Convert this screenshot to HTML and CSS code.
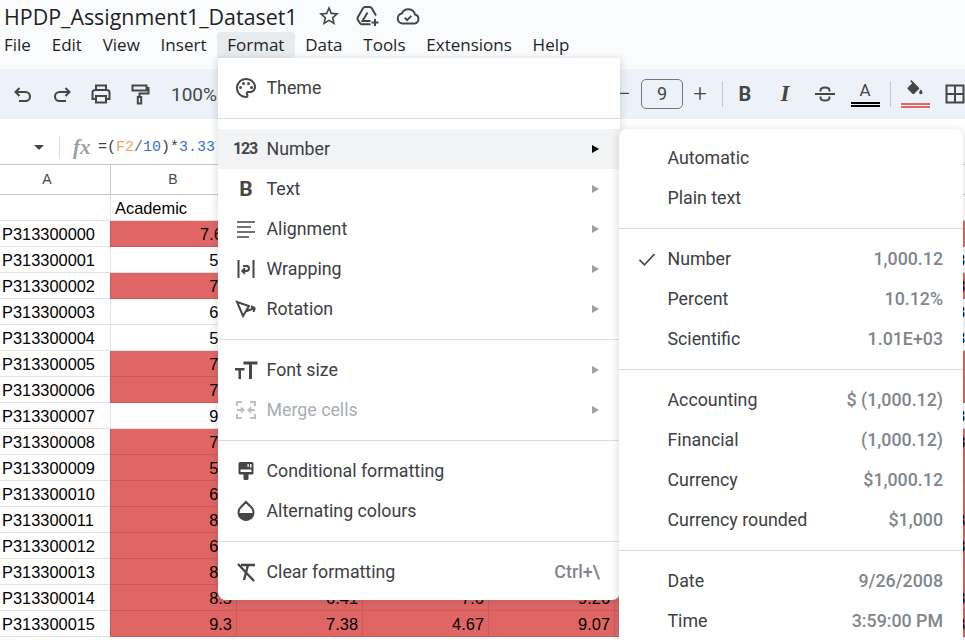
FILE: index.html
```html
<!DOCTYPE html>
<html lang="en">
<head>
<meta charset="utf-8">
<title>HPDP_Assignment1_Dataset1</title>
<link rel="stylesheet" href="styles.css">
</head>
<body>
<div class="app">
  <header class="head">
    <div class="title-row">
      <span class="doc-title">HPDP_Assignment1_Dataset1</span>
      <span class="title-icons">
        <svg class="t-icon" viewBox="0 0 24 24"><path class="fill" d="M22 9.24l-7.19-.62L12 2 9.19 8.63 2 9.24l5.46 4.73L5.82 21 12 17.27 18.18 21l-1.63-7.03L22 9.24zM12 15.4l-3.76 2.27 1-4.28-3.32-2.88 4.38-.38L12 6.1l1.71 4.04 4.38.38-3.32 2.88 1 4.28L12 15.4z"/></svg>
        <svg class="t-icon" viewBox="0 0 24 24"><path class="line" d="M9 3h4.500q1.500 0 2.300 1.300L20 11.500M9 3q-1.300 0-2 1.200L1.800 13.300q-.7 1.200 0 2.400l2 3.300q.8 1.300 2.200 1.300h8.500M11.500 8.500l-5 8.500h8M19 15v7M15.500 18.500h7"/></svg>
        <svg class="t-icon" viewBox="0 0 24 24"><path class="line" d="M6.500 19.500a5 5 0 0 1-.7-9.900A7 7 0 0 1 19 10.500a4.600 4.600 0 0 1-.5 9zM8.800 13.800l2.300 2.300 4.200-4.200"/></svg>
      </span>
    </div>
    <nav class="menu-bar">
      <span class="menu-item">File</span>
      <span class="menu-item">Edit</span>
      <span class="menu-item">View</span>
      <span class="menu-item">Insert</span>
      <span class="menu-item active">Format</span>
      <span class="menu-item">Data</span>
      <span class="menu-item">Tools</span>
      <span class="menu-item">Extensions</span>
      <span class="menu-item">Help</span>
    </nav>
  </header>

  <div class="toolbar">
    <svg class="tb-icon" viewBox="0 0 24 24"><path class="line" d="M8.500 6L4.500 10l4 4M4.500 10h10a4.500 4.500 0 0 1 0 9H8"/></svg>
    <svg class="tb-icon" viewBox="0 0 24 24"><path class="line" d="M15.500 6l4 4-4 4M19.500 10h-10a4.500 4.500 0 0 0 0 9H16"/></svg>
    <svg class="tb-icon" viewBox="0 0 24 24"><path class="line" d="M7 8V3.500h10V8M7 17H3.500v-6.500A2.500 2.500 0 0 1 6 8h12a2.500 2.500 0 0 1 2.500 2.500V17H17M7 14h10v6.500H7z"/></svg>
    <svg class="tb-icon" viewBox="0 0 24 24"><path class="line" d="M4.500 3.500h14v5h-14zM18.500 6h2v5.500h-9V15M9.800 15h3.400v6.500H9.800z"/></svg>
    <span class="zoom-level">100%</span>
    <div class="tb-right">
      <span class="tb-glyph">−</span>
      <span class="size-box">9</span>
      <span class="tb-glyph">+</span>
      <span class="tb-divider first"></span>
      <span class="tb-slot tb-bold">B</span>
      <span class="tb-slot tb-italic">I</span>
      <span class="tb-slot"><svg class="tb-icon" viewBox="0 0 24 24"><path class="line" d="M2 12h20M7.500 9.500V8.500C7.500 6.500 9.500 5.500 12 5.500s4.500 1 4.500 3v1M7.500 14.500v1c0 2 2 3 4.500 3s4.500-1 4.500-3v-1"/></svg></span>
      <span class="tb-slot swatch"><span class="swatch-a">A</span><span class="swatch-bar"></span></span>
      <span class="tb-divider"></span>
      <span class="tb-slot swatch">
        <svg class="fill-icon" viewBox="0 0 24 24"><path class="fill" d="M16.560 8.940L7.620 0 6.210 1.410l2.380 2.380-5.150 5.150c-.59.59-.59 1.540 0 2.120l5.500 5.500c.29.29.68.44 1.060.44s.77-.15 1.060-.44l5.500-5.500c.59-.58.59-1.530 0-2.120zM19 11.500s-2 2.170-2 3.500c0 1.100.9 2 2 2s2-.9 2-2c0-1.330-2-3.500-2-3.500z"/></svg>
        <span class="swatch-bar red"></span>
      </span>
      <span class="tb-slot"><svg class="tb-icon" viewBox="0 0 24 24"><path class="line" d="M3.500 3.500h17v17h-17zM12 3.500v17M3.500 12h17"/></svg></span>
    </div>
  </div>

  <div class="formula-bar">
    <span class="name-arrow"></span>
    <span class="fb-divider"></span>
    <span class="fx">fx</span>
    <code class="formula"><span>=(</span><span class="ref">F2</span><span class="op">/</span><span class="num">10</span><span>)*</span><span class="num">3.33</span></code>
  </div>

  <div class="sheet">
    <div class="cell first colhead col-a">A</div><div class="cell colhead">B</div><div class="cell colhead"></div><div class="cell colhead"></div><div class="cell colhead"></div><div class="cell colhead"></div><div class="cell colhead"></div>
    <div class="cell first"></div><div class="cell note">Academic</div><div class="cell"></div><div class="cell"></div><div class="cell"></div><div class="cell"></div><div class="cell"></div>

    <div class="cell first">P313300000</div><div class="cell hot">7.61</div><div class="cell hot"></div><div class="cell hot"></div><div class="cell hot"></div><div class="cell hot"></div><div class="cell hot"></div>
    <div class="cell first">P313300001</div><div class="cell">5.5</div><div class="cell"></div><div class="cell"></div><div class="cell"></div><div class="cell"></div><div class="cell">8</div>
    <div class="cell first">P313300002</div><div class="cell hot">7.5</div><div class="cell hot"></div><div class="cell hot"></div><div class="cell hot"></div><div class="cell hot"></div><div class="cell hot">8</div>
    <div class="cell first">P313300003</div><div class="cell">6.5</div><div class="cell"></div><div class="cell"></div><div class="cell"></div><div class="cell"></div><div class="cell">8</div>
    <div class="cell first">P313300004</div><div class="cell">5.5</div><div class="cell"></div><div class="cell"></div><div class="cell"></div><div class="cell"></div><div class="cell">8</div>
    <div class="cell first">P313300005</div><div class="cell hot">7.5</div><div class="cell hot"></div><div class="cell hot"></div><div class="cell hot"></div><div class="cell hot"></div><div class="cell hot"></div>
    <div class="cell first">P313300006</div><div class="cell hot">7.5</div><div class="cell hot"></div><div class="cell hot"></div><div class="cell hot"></div><div class="cell hot"></div><div class="cell hot"></div>
    <div class="cell first">P313300007</div><div class="cell">9.5</div><div class="cell"></div><div class="cell"></div><div class="cell"></div><div class="cell"></div><div class="cell">8</div>
    <div class="cell first">P313300008</div><div class="cell hot">7.5</div><div class="cell hot"></div><div class="cell hot"></div><div class="cell hot"></div><div class="cell hot"></div><div class="cell hot">8</div>
    <div class="cell first">P313300009</div><div class="cell hot">5.5</div><div class="cell hot"></div><div class="cell hot"></div><div class="cell hot"></div><div class="cell hot"></div><div class="cell hot"></div>
    <div class="cell first">P313300010</div><div class="cell hot">6.5</div><div class="cell hot"></div><div class="cell hot"></div><div class="cell hot"></div><div class="cell hot"></div><div class="cell hot"></div>
    <div class="cell first">P313300011</div><div class="cell hot">8.5</div><div class="cell hot"></div><div class="cell hot"></div><div class="cell hot"></div><div class="cell hot"></div><div class="cell hot">8</div>
    <div class="cell first">P313300012</div><div class="cell hot">6.5</div><div class="cell hot"></div><div class="cell hot"></div><div class="cell hot"></div><div class="cell hot"></div><div class="cell hot">8</div>
    <div class="cell first">P313300013</div><div class="cell hot">8.5</div><div class="cell hot"></div><div class="cell hot"></div><div class="cell hot"></div><div class="cell hot"></div><div class="cell hot"></div>
    <div class="cell first">P313300014</div><div class="cell hot">8.5</div><div class="cell hot">6.41</div><div class="cell hot">7.6</div><div class="cell hot">9.26</div><div class="cell hot"></div><div class="cell hot">8</div>
    <div class="cell first">P313300015</div><div class="cell hot">9.3</div><div class="cell hot">7.38</div><div class="cell hot">4.67</div><div class="cell hot">9.07</div><div class="cell hot"></div><div class="cell hot">8</div>
  </div>

  <div class="menu format-menu">
    <div class="row">
      <svg class="m-icon" viewBox="0 0 24 24"><path class="fill" d="M12 22C6.490 22 2 17.510 2 12S6.490 2 12 2s10 4.040 10 9c0 3.310-2.690 6-6 6h-1.770c-.28 0-.5.22-.5.5 0 .12.050.23.130.33.410.47.640 1.060.640 1.670A2.500 2.500 0 0 1 12 22zm0-18c-4.410 0-8 3.590-8 8s3.590 8 8 8c.28 0 .5-.22.5-.5a.54.54 0 0 0-.14-.35c-.41-.46-.63-1.050-.63-1.650a2.500 2.500 0 0 1 2.500-2.500H16c2.210 0 4-1.790 4-4 0-3.860-3.590-7-8-7z"/><circle class="fill" cx="6.500" cy="11.500" r="1.500"/><circle class="fill" cx="9.500" cy="7.500" r="1.500"/><circle class="fill" cx="14.500" cy="7.500" r="1.500"/><circle class="fill" cx="17.500" cy="11.500" r="1.500"/></svg>
      <span class="label">Theme</span>
    </div>
    <div class="sep"></div>
    <div class="row current">
      <span class="m-text digits">123</span>
      <span class="label">Number</span><span class="caret dark"></span>
    </div>
    <div class="row">
      <span class="m-text bold-b">B</span>
      <span class="label">Text</span><span class="caret"></span>
    </div>
    <div class="row">
      <svg class="m-icon" viewBox="0 0 24 24"><path class="line slim" d="M3 5h18M3 10h14M3 15h18M3 20h12"/></svg>
      <span class="label">Alignment</span><span class="caret"></span>
    </div>
    <div class="row">
      <svg class="m-icon" viewBox="0 0 24 24"><path class="line" d="M4.500 3v18M19.500 3v18M9 9h3.500a2.500 2.500 0 0 1 0 5H8.500M11 11.300L8.300 14l2.700 2.700"/></svg>
      <span class="label">Wrapping</span><span class="caret"></span>
    </div>
    <div class="row">
      <svg class="m-icon" viewBox="0 0 24 24"><path class="line" d="M3 5l12 4-6 10zM15 9l-6 10M11.500 14.500L21 11M21 11l-4-1.500M21 11l-1.500 4"/></svg>
      <span class="label">Rotation</span><span class="caret"></span>
    </div>
    <div class="sep"></div>
    <div class="row">
      <svg class="m-icon" viewBox="0 0 24 24"><path class="fill" d="M9.500 3.500h14v3h-5.500V21h-3V6.500H9.500zM1 10h9.500v2.500H7V21H4.500v-8.500H1z"/></svg>
      <span class="label">Font size</span><span class="caret"></span>
    </div>
    <div class="row disabled">
      <svg class="m-icon" viewBox="0 0 24 24"><path class="line faint" d="M3 8V4h5M16 4h5v4M3 16v4h5M16 20h5v-4M3 12h6.500M7 9.500L9.500 12 7 14.500M21 12h-6.500M17 9.500L14.500 12l2.500 2.500"/></svg>
      <span class="label">Merge cells</span><span class="caret"></span>
    </div>
    <div class="sep"></div>
    <div class="row">
      <svg class="m-icon" viewBox="0 0 24 24"><path class="fill" d="M6 3h12a1.500 1.500 0 0 1 1.500 1.500V14a1.500 1.500 0 0 1-1.500 1.500h-3.500v4a1.500 1.500 0 0 1-1.500 1.500h-2a1.500 1.500 0 0 1-1.500-1.500v-4H6A1.500 1.500 0 0 1 4.500 14V4.500A1.500 1.500 0 0 1 6 3zm.500 7.500v2.500h11v-2.500zm7-5.500v3h1.300V5zm2.500 0v3.500h1.500V5z"/></svg>
      <span class="label">Conditional formatting</span>
    </div>
    <div class="row">
      <svg class="m-icon" viewBox="0 0 24 24"><path class="line" d="M12 3l5.300 5.200a7.500 7.500 0 1 1-10.600 0z"/><path class="fill" d="M4.500 14h15a7.500 7.500 0 0 1-15 0z"/></svg>
      <span class="label">Alternating colours</span>
    </div>
    <div class="sep"></div>
    <div class="row">
      <svg class="m-icon" viewBox="0 0 24 24"><path class="line thick" d="M7 5h14M14 5l-4 15M4 4l16 17"/></svg>
      <span class="label">Clear formatting</span><span class="hint">Ctrl+\</span>
    </div>
  </div>

  <div class="menu number-menu">
    <div class="row sub"><span class="label">Automatic</span></div>
    <div class="row sub"><span class="label">Plain text</span></div>
    <div class="sep"></div>
    <div class="row sub"><svg class="check" viewBox="0 0 24 24"><path class="line" d="M3 13l6 6L21 6"/></svg><span class="label">Number</span><span class="hint">1,000.12</span></div>
    <div class="row sub"><span class="label">Percent</span><span class="hint">10.12%</span></div>
    <div class="row sub"><span class="label">Scientific</span><span class="hint">1.01E+03</span></div>
    <div class="sep"></div>
    <div class="row sub"><span class="label">Accounting</span><span class="hint">$ (1,000.12)</span></div>
    <div class="row sub"><span class="label">Financial</span><span class="hint">(1,000.12)</span></div>
    <div class="row sub"><span class="label">Currency</span><span class="hint">$1,000.12</span></div>
    <div class="row sub"><span class="label">Currency rounded</span><span class="hint">$1,000</span></div>
    <div class="sep"></div>
    <div class="row sub"><span class="label">Date</span><span class="hint">9/26/2008</span></div>
    <div class="row sub"><span class="label">Time</span><span class="hint">3:59:00 PM</span></div>
  </div>
</div>
</body>
</html>
```
FILE: styles.css
```css
* { box-sizing: border-box; }
html, body { margin: 0; height: 100%; overflow: hidden; background: #fff; }
.app { position: relative; width: 965px; height: 640px; overflow: hidden; font-family: Roboto, sans-serif; color: #3c4043; }
.line { fill: none; stroke: #444746; stroke-width: 2; }
.line.thick { stroke-width: 2.4; }
.line.slim { stroke-width: 1.6; }
.line.faint { stroke: #bdc1c6; }
.fill { fill: #444746; }

.head { height: 69px; background: #f9fbfd; }
.title-row { height: 32px; display: flex; align-items: center; padding-left: 4px; }
.doc-title { font-family: "Open Sans", sans-serif; font-size: 21.4px; color: #1f1f1f; }
.title-icons { display: flex; align-items: center; gap: 15.5px; margin-left: 19px; }
.t-icon { width: 24px; height: 24px; }
.menu-bar { display: flex; height: 26px; }
.menu-item { padding: 0 10.4px; font-family: "Open Sans", sans-serif; font-size: 17px; line-height: 26px; color: #1f1f1f; }
.menu-item:first-child { padding-left: 4px; }
.menu-item.active { background: #e8ebee; border-radius: 4px 4px 0 0; }

.toolbar { height: 50px; background: #edf2fa; display: flex; align-items: center; padding-left: 11px; gap: 15px; }
.tb-icon { width: 24px; height: 24px; flex: none; }
.zoom-level { font-size: 19px; color: #444746; margin-left: 4px; }
.tb-right { position: absolute; left: 611px; top: 69px; height: 50px; width: 354px; display: flex; align-items: center; }
.tb-glyph { width: 26px; text-align: center; font-size: 24px; font-weight: 300; color: #444746; flex: none; }
.size-box { width: 42px; height: 30px; margin: 0 4px; border: 1px solid #747775; border-radius: 5px; text-align: center; line-height: 28px; font-size: 18px; color: #444746; flex: none; }
.tb-divider { width: 1px; height: 26px; background: #c7c7c7; margin: 0 4px 0 5px; flex: none; }
.tb-divider.first { margin: 0 2px 0 9px; }
.tb-slot { width: 40px; flex: none; display: flex; flex-direction: column; align-items: center; justify-content: center; color: #444746; }
.tb-bold { font-weight: 700; font-size: 20px; }
.tb-italic { font-family: "Liberation Serif", serif; font-style: italic; font-weight: 700; font-size: 23px; }
.swatch-a { font-size: 17px; line-height: 17px; color: #444746; }
.swatch-bar { width: 29px; height: 5px; margin-top: 3px; border-top: 2px solid #000; border-bottom: 2px solid #000; }
.swatch-bar.red { border-color: #e06666; }
.fill-icon { width: 20px; height: 20px; }

.formula-bar { height: 35px; margin-top: 11px; display: flex; align-items: center; border-bottom: 1px solid #c7c7c7; background: #fff; padding-left: 34px; }
.name-arrow { width: 0; height: 0; border: 5px solid transparent; border-top: 5px solid #444746; border-bottom: 0; }
.fb-divider { width: 1px; height: 21px; background: #dadce0; margin-left: 15px; }
.fx { font-family: "Liberation Serif", serif; font-style: italic; font-size: 21px; font-weight: 700; color: #9aa0a6; margin-left: 13px; width: 25px; }
.formula { font-family: "Liberation Mono", monospace; font-size: 15px; color: #3c4043; }
.formula .ref { color: #f6a65c; }
.formula .op { color: #5b6b8c; }
.formula .num { color: #3a72c9; }

.sheet { display: grid; grid-template-columns: 110px repeat(5, 126px) 229px; grid-template-rows: 30px; grid-auto-rows: 26px; font-family: "Liberation Sans", sans-serif; font-size: 16.4px; color: #000; }
.cell { border-left: 1px solid #e2e3e3; border-bottom: 1px solid #e2e3e3; text-align: right; line-height: 27px; padding: 0 4px 0 3px; overflow: hidden; white-space: nowrap; background: #fff; }
.cell.first { text-align: left; padding-left: 2px; border-left: 0; }
.cell.note { text-align: left; padding-left: 4px; }
.cell.colhead { line-height: 29px; text-align: center; font-size: 14px; color: #444746; border-color: #c7c7c7; }
.cell.col-a { padding: 0 16px 0 0; text-align: center; }
.cell.hot { background: #e06666; border-color: #c95a5a; }

.menu { position: absolute; background: #fff; box-shadow: 0 2px 6px 2px rgba(60,64,67,.15); }
.format-menu { left: 218px; top: 58px; width: 402px; height: 542px; padding-top: 10px; border-radius: 0 0 8px 8px; }
.number-menu { left: 619px; top: 129px; width: 344px; height: 530px; padding-top: 9px; border-radius: 8px; }
.row { height: 40px; display: flex; align-items: center; font-size: 17.8px; padding-left: 16px; padding-right: 20px; }
.row.sub { padding-left: 49px; position: relative; }
.row.current { background: #f1f3f4; }
.row.disabled { color: #a8adb2; }
.m-icon, .m-text { width: 24px; height: 24px; margin-right: 9px; flex: none; }
.m-text { font-weight: 700; color: #444746; text-align: center; line-height: 24px; }
.digits { font-size: 16px; letter-spacing: -1.2px; white-space: nowrap; margin-left: -1px; margin-right: 10px; }
.bold-b { font-size: 21px; }
.label { flex: 1; margin-bottom: 2px; margin-left: -0.5px; }
.caret { width: 0; height: 0; border-left: 7px solid #9aa0a6; border-top: 4px solid transparent; border-bottom: 4px solid transparent; margin-right: 1px; }
.caret.dark { border-left-color: #000; }
.hint { color: #80868b; font-weight: 500; margin-bottom: 2px; }
.check { position: absolute; left: 18px; top: 10px; width: 20px; height: 20px; }
.sep { height: 1px; background: #dadce0; margin: 10px 0; }
```
